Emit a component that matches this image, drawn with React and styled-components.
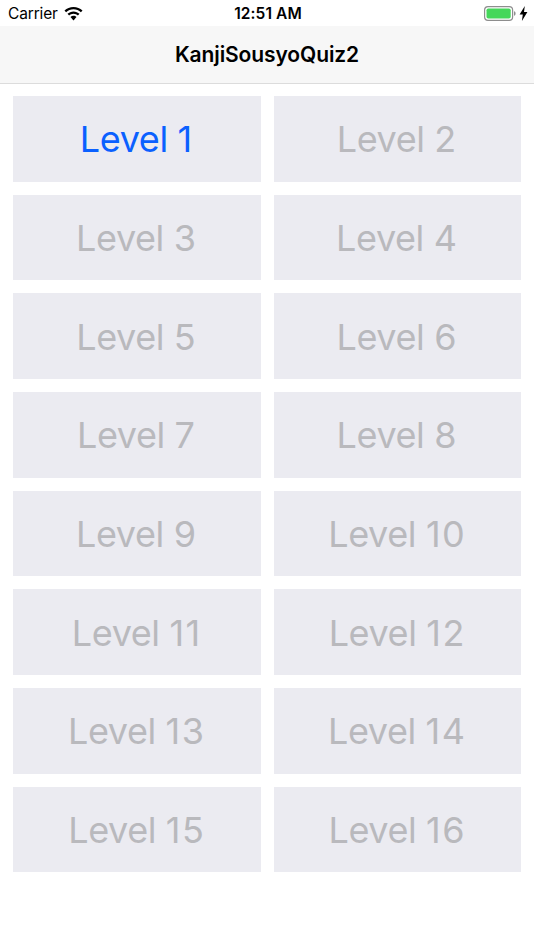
import React from "react";
import styled, { createGlobalStyle } from "styled-components";

const Global = createGlobalStyle`
  html, body { margin: 0; padding: 0; background: #fff; }
  body { font-family: Inter, "Liberation Sans", sans-serif; }
`;

const Page = styled.div`
  width: 534px;
  height: 950px;
  background: #fff;
  overflow: hidden;
  display: flex;
  flex-direction: column;
`;

const StatusBar = styled.div`
  height: 26px;
  display: grid;
  grid-template-columns: 1fr auto 1fr;
  align-items: center;
  padding: 1px 6px 0 8px;
  box-sizing: border-box;
  color: #000;
  font-size: 15.5px;
`;

const StatusLeft = styled.div`
  display: flex;
  align-items: center;
  gap: 6px;
`;

const Carrier = styled.span`
  letter-spacing: -0.15px;
`;

const Time = styled.span`
  font-weight: 600;
  letter-spacing: 0.1px;
`;

const StatusRight = styled.div`
  display: flex;
  align-items: center;
  justify-content: flex-end;
  gap: 3px;
`;

const NavBar = styled.header`
  height: 56.5px;
  background: #f7f7f7;
  border-bottom: 1.5px solid #dcdcdc;
  display: flex;
  align-items: center;
  justify-content: center;
`;

const Title = styled.h1`
  margin: 0;
  font-size: 21px;
  font-weight: 600;
  color: #000;
  letter-spacing: -0.1px;
`;

const Grid = styled.main`
  display: grid;
  grid-template-columns: 1fr 1fr;
  grid-auto-rows: 85.67px;
  gap: 13px;
  padding: 12.5px 13px;
`;

const LevelButton = styled.button`
  border: 0;
  padding: 1px 0 0;
  background: #ebebf1;
  color: ${(p) => (p.$active ? "#0a60ff" : "#b9b9bd")};
  font-family: inherit;
  font-size: 36px;
  font-weight: 400;
  letter-spacing: -0.4px;
`;

const LevelNumber = styled.span`
  letter-spacing: 1.5px;
`;

const Wifi = () => (
  <svg width="19" height="14" viewBox="0 0 19 14" fill="#000">
    <path d="M9.5 0C6 0 2.9 1.3.5 3.6l1.6 1.7C4.1 3.4 6.6 2.3 9.5 2.3s5.4 1.1 7.4 3l1.6-1.7C16.1 1.3 13 0 9.5 0z" />
    <path d="M9.5 4.4c-2.3 0-4.4.9-6 2.4l1.6 1.7c1.2-1.1 2.7-1.8 4.4-1.8s3.2.7 4.4 1.8l1.6-1.7c-1.6-1.5-3.7-2.4-6-2.4z" />
    <path d="M9.5 8.8c-1.2 0-2.2.5-3 1.2l3 3.4 3-3.4c-.8-.7-1.8-1.2-3-1.2z" />
  </svg>
);

const Battery = () => (
  <svg width="32" height="15" viewBox="0 0 32 15">
    <rect x="0.6" y="0.6" width="28" height="13.8" rx="3.4" fill="none" stroke="#8e8e8e" strokeWidth="1.2" />
    <rect x="2.5" y="2.5" width="24.2" height="10" rx="1.8" fill="#45d75a" />
    <path d="M30 5.2c1 .2 1.6 1.1 1.6 2.3s-.6 2.1-1.6 2.3z" fill="#8e8e8e" />
  </svg>
);

const Bolt = () => (
  <svg width="9" height="15" viewBox="0 0 9 15" fill="#000">
    <path d="M5.8 0 .6 8.4h3.2L2.9 15l5.5-8.9H5z" />
  </svg>
);

const levels = Array.from({ length: 16 }, (_, i) => i + 1);

export default function App() {
  return (
    <Page>
      <Global />
      <StatusBar>
        <StatusLeft>
          <Carrier>Carrier</Carrier>
          <Wifi />
        </StatusLeft>
        <Time>12:51 AM</Time>
        <StatusRight>
          <Battery />
          <Bolt />
        </StatusRight>
      </StatusBar>
      <NavBar>
        <Title>KanjiSousyoQuiz2</Title>
      </NavBar>
      <Grid>
        {levels.map((n) => (
          <LevelButton key={n} $active={n === 1}>
            Level <LevelNumber>{n}</LevelNumber>
          </LevelButton>
        ))}
      </Grid>
    </Page>
  );
}
